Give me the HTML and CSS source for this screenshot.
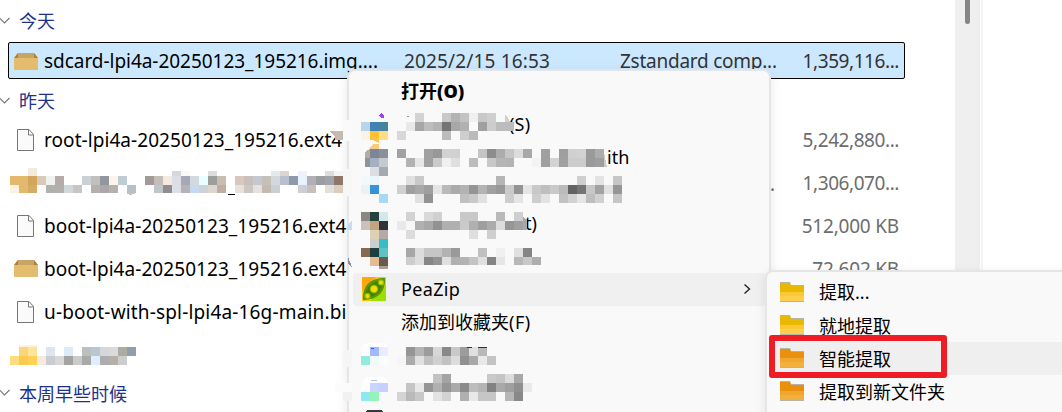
FILE: index.html
```
<!DOCTYPE html>
<html lang="zh-CN">
<head>
<meta charset="utf-8">
<title>Files</title>
<link rel="stylesheet" href="styles.css">
</head>
<body>
<svg width="0" height="0" class="defs">
  <symbol id="chev" viewBox="0 0 12 8"><path d="M0.5 1 L5.5 6 L10.5 1" fill="none" stroke="#767676" stroke-width="1.1"/></symbol>
  <symbol id="box" viewBox="0 0 24 17"><path d="M4 0H20L24 5V17H0V5Z" fill="#e3bc6e"/><path d="M4 0H20L24 5H0Z" fill="#a9803d"/><path d="M4 0H20V5H4Z" fill="#c8a564"/></symbol>
  <symbol id="doc" viewBox="0 0 18 22"><path d="M.5 .5H12L16.5 5.5V21.5H.5Z" fill="#fafafa" stroke="#777"/><path d="M11.5 .5V6H16.5" fill="none" stroke="#777"/></symbol>
  <symbol id="folder" viewBox="0 0 24 20"><path d="M0 0H10L11 3H24V20H0Z" fill="#b9b3a5"/><path class="f-back" d="M0 1H10L11 4H24V10H0Z"/><path class="f-front" d="M0 10H24V19H0Z"/><path class="f-mid" d="M0 10H24V14H0Z" opacity=".5"/></symbol>
</svg>
<div class="window">
  <main class="list">
    <div class="group first"><svg class="chev"><use href="#chev"/></svg><span>今天</span></div>
    <div class="row selected"><span class="ico"><svg class="box"><use href="#box"/></svg></span><span class="name sd">sdcard-lpi4a-20250123_195216.img....</span><span class="date">2025/2/15 16:53</span><span class="type">Zstandard comp...</span><span class="size">1,359,116...</span></div>
    <div class="group"><svg class="chev"><use href="#chev"/></svg><span>昨天</span></div>
    <div class="row"><span class="ico"><svg class="doc"><use href="#doc"/></svg></span><span class="name">root-lpi4a-20250123_195216.ext4</span><span class="size">5,242,880...</span></div>
    <div class="row"><span class="name"></span><span class="rest">.</span><span class="size">1,306,070...</span></div>
    <div class="row"><span class="ico"><svg class="doc"><use href="#doc"/></svg></span><span class="name">boot-lpi4a-20250123_195216.ext4</span><span class="size kb">512,000 KB</span></div>
    <div class="row"><span class="ico"><svg class="box"><use href="#box"/></svg></span><span class="name">boot-lpi4a-20250123_195216.ext4</span><span class="size kb">72,602 KB</span></div>
    <div class="row"><span class="ico"><svg class="doc"><use href="#doc"/></svg></span><span class="name ub">u-boot-with-spl-lpi4a-16g-main.bi</span></div>
    <div class="row"></div>
    <div class="group last"><svg class="chev"><use href="#chev"/></svg><span>本周早些时候</span></div>
  </main>
  <div class="scrollbar"><div class="thumb"></div></div>
  <aside class="preview"></aside>

  <div class="menu">
    <div class="item bold"><span>打开<b class="lat">(O)</b></span></div>
    <div class="item"><span class="lat tail-s">(S)</span></div>
    <div class="item"><span class="lat tail-ith">ith</span></div>
    <div class="item"></div>
    <div class="item"><span class="lat tail-t">t)</span></div>
    <div class="item"></div>
    <div class="item active">
      <svg class="pea" viewBox="0 0 24 24"><rect width="24" height="24" fill="#ffc80a"/><path d="M0 0H14L0 14Z" fill="#ffa60a"/><path d="M24 8V24H8Z" fill="#9be000"/><path d="M1 23C0 8 9 1 23 1C24 14 16 23 1 23Z" fill="#5c9500"/><path d="M3 21C3 11 10 4 21 3C21 13 14 20 3 21Z" fill="#4b7d00"/><g fill="#ffdc00" stroke="#8fc800" stroke-width="1.3"><circle cx="12" cy="12" r="3.6"/><circle cx="19" cy="5.5" r="2.4"/><circle cx="5.5" cy="19" r="2.4"/></g></svg>
      <span class="lat pz">PeaZip</span>
      <svg class="arrow" viewBox="0 0 8 12"><path d="M1.5 1.5L6.5 6L1.5 10.5" fill="none" stroke="#222" stroke-width="1.4"/></svg>
    </div>
    <div class="item"><span>添加到收藏夹<span class="lat fav">(F)</span></span></div>
    <div class="item"></div>
    <div class="item"></div>
  </div>

  <svg class="mosaic" id="mosaic" width="1062" height="412" shape-rendering="crispEdges"></svg>

  <div class="submenu">
    <div class="sub"><svg class="folder yellow"><use href="#folder"/></svg><span>提取<span class="lat">...</span></span></div>
    <div class="sub"><svg class="folder yellow"><use href="#folder"/></svg><span>就地提取</span></div>
    <div class="sub active"><svg class="folder orange"><use href="#folder"/></svg><span>智能提取</span></div>
    <div class="sub"><svg class="folder orange"><use href="#folder"/></svg><span>提取到新文件夹</span></div>
  </div>
  <div class="mark"></div>
</div>
<script src="mosaic.js"></script>
</body>
</html>
```

FILE: styles.css
```
body { margin: 0; background: #fff; }
.defs { position: absolute; }
.window {
  position: relative; display: flex; width: 1062px; height: 412px; overflow: hidden;
  font-family: "Noto Sans", "Noto Sans CJK SC", sans-serif; font-size: 19px; color: #000; white-space: nowrap;
}
.list { width: 955px; height: 412px; overflow: hidden; flex: none; }
.group {
  display: flex; align-items: center; height: 40px; gap: 8px; box-sizing: border-box; padding-top: 3px;
  font: 18px "Noto Sans CJK SC", sans-serif; color: #1d3287;
}
.group.first { height: 42px; padding-top: 0; }
.group.last { height: 35px; padding-top: 0; }
.group span, .row > .name, .row > .size, .row > .date, .row > .type, .item > span, .sub > span { padding-bottom: 2px; }
.chev { width: 12px; height: 8px; flex: none; margin-left: -1px; }
.group.last .chev { margin-bottom: 3px; }
.group.last span { padding-bottom: 4px; }
.row {
  display: grid; grid-template-columns: 36px 360px 216px 160px 125px; align-items: center;
  width: 897px; height: 43px; margin-left: 8px; box-sizing: border-box; line-height: 26px;
}
.row.selected { height: 37px; background: #cce8ff; border: 1px solid #000; border-radius: 2px; grid-template-columns: 35px 360px 216px 160px 124px; }
.row.selected > span { padding-bottom: 0; }
.ico { display: flex; grid-column: 1; }
.box { width: 24px; height: 17px; margin-left: 6px; margin-bottom: 2px; }
.selected .box { margin: 1px 0 0 5px; }
.doc { width: 18px; height: 22px; margin-left: 9px; margin-bottom: 2px; }
.name { grid-column: 2; letter-spacing: .06px; }
.sd { letter-spacing: -.04px; }
.ub { letter-spacing: .16px; }
.date { grid-column: 3; color: #333; letter-spacing: .16px; }
.type { grid-column: 4; color: #333; letter-spacing: -.25px; }
.rest { grid-column: 4; color: #6d6d6d; text-align: right; padding-right: 5px; }
.size { grid-column: 5; color: #6d6d6d; justify-self: end; letter-spacing: -.43px; }
.kb { letter-spacing: -.2px; }
.row:not(.selected) .size { padding-right: 6px; }
.row.selected .size { color: #333; padding-right: 5px; }
.scrollbar { width: 25px; background: #efefef; flex: none; }
.thumb { width: 5px; height: 24px; margin-left: 10px; border-radius: 0 0 3px 3px; background: #858585; }
.preview { flex: 1; margin-left: 1px; border-left: 2px solid #f5f5f5; }

.menu {
  position: absolute; left: 347px; top: 69px; width: 424px; height: 380px; box-sizing: border-box;
  background: #f9f9f9; border: 2px solid #e5e5e5; border-radius: 8px; padding: 4px 3px;
  box-shadow: 0 3px 12px rgba(0,0,0,.09);
}
.item { display: flex; align-items: center; height: 33px; padding-left: 49px; border-radius: 4px; font: 18px/26px "Noto Sans CJK SC", sans-serif; }
.lat { font-family: "Noto Sans", sans-serif; font-size: 18px; }
.bold { font-weight: 700; }
.item.active { background: #f0f0f0; margin-left: 1px; padding-left: 9px; }
.pea { width: 24px; height: 24px; margin-right: 15px; margin-bottom: 1px; }
.pz { letter-spacing: .35px; }
.fav { letter-spacing: .5px; }
.arrow { width: 8px; height: 12px; margin-left: auto; margin-right: 15px; margin-bottom: 2px; }
.tail-s { padding-left: 108px; letter-spacing: .2px; }
.tail-ith { padding-left: 206px; }
.tail-t { padding-left: 124px; }
.mosaic { position: absolute; left: 0; top: 0; }

.submenu {
  position: absolute; left: 765px; top: 270px; width: 320px; height: 180px; box-sizing: border-box;
  background: #f9f9f9; border: 2px solid #e5e5e5; border-radius: 8px; padding: 4px 3px;
  box-shadow: 0 3px 12px rgba(0,0,0,.09);
}
.sub { display: flex; align-items: center; height: 33px; padding-left: 10px; gap: 15px; font: 18px/26px "Noto Sans CJK SC", sans-serif; }
.sub.active { background: #efefef; }
.folder { width: 24px; height: 20px; margin-bottom: 1px; }
.yellow { --back: #e9b800; --front: #ffce4c; }
.orange { --back: #ea900d; --front: #f4b03c; }
.f-back { fill: var(--back); }
.f-front { fill: var(--front); }
.f-mid { fill: var(--back); opacity: .3; }
.mark { position: absolute; left: 769px; top: 335px; width: 178px; height: 43px; box-sizing: border-box; border: 6px solid #ee1c24; border-radius: 3px; }
```

FILE: mosaic.js
```
// Pixelated cells: [y, x of the first cell, cells]; "." leaves a cell empty, two digits are a gray level.
const CELL = 9;
const rows = [
  [113, 397, ". . d3 . . c8 b3 c3 f0 c8 cf"],
  [122, 397, ". e8 a6 bd b3 74 a8 b1 fa a0 cd bc bb"],
  [131, 397, "d8 . . . . bc . ce bb"],
  [149, 397, "a2 . . a0 98 d2 d1 . . c4 8c ab c6 dc a8 . a0 . 9f d0 d2 9a ad"],
  [158, 397, ". b3 e7 a0 cb f0 df . bc . c8 b5 b3 . . f3 a0 d3 a0 cc cc 9a 9e"],
  [176, 397, ". e0 c9 . . . . . . . . b5 . . . . . . . . cf . e3 . c6"],
  [185, 397, "d0 a0 a8 9f e5 b9 ab b3 95 b3 a0 98 ca 94 e5 c8 bf c9 ba 63 74 c7 a2 e0 96"],
  [194, 397, ". . e0 92 . . . c0 c9 e1 . . cd e5 . ce e3 . c2 d2 e5 be d1 . c6"],
  [212, 397, ". d3 . d9 d0 . . c8 c8 . . b9 . cf"],
  [221, 397, "e9 f7 b1 a8 92 b0 b0 ca b0 9f ac dd 96 a0"],
  [230, 397, ". dc . . . . . . de . cf"],
  [248, 397, ". a7 dc c6 c6 b3 9a . . c0 . f0 . e0 84"],
  [257, 397, ". cd dd 85 93 df b0 b3 c4 e0 84 e6 . b8 c8 ae", 8],
  [347, 397, ". 95 b4 9c d7 88 c9 9d e0 b9"],
  [356, 397, "f6 ab e0 c1 d0 c2 dc 91 a9 e9 c4"],
  [374, 397, ". . . . c2 a3 . . . . c9 c4 dc a8"],
  [383, 397, ". c5 e8 95 b0 95 ab 8b bd b5 82 a9 9f 90 e9"],
  [392, 397, "d4 b9 c8 . e2 d2 . b0 e8 c6 c6 . b7 89"],
  [122, 361, "b9d5ea 4282b4 45829b"],
  [131, 361, "f9f4e7 ffc234 fbdd88"],
  [167, 361, ". dcdfe1 a5aab0"],
  [176, 361, "f3f8fb ebf6fa"],
  [185, 361, "eaf1f7 3593d8"],
  [194, 361, ". . a9d8f2"],
  [212, 361, "8d8682 25423f d1e9eb"],
  [221, 361, "c9c1be c2a57e 303338"],
  [230, 361, ". ddd0b5 b4a9a5"],
  [239, 361, ". cdcdcd 36bfc0"],
  [248, 361, "87694f 1c3f40 5dc2c2"],
  [257, 361, ". e4bc90 69584b"],
  [266, 361, ". . ac9b91", 3],
  [347, 361, "fdfdfd a2b9ff e8edff"],
  [356, 361, "92ecdc f0faf8 fbfcfd"],
  [383, 361, "fdfdfd c8d5ff c4d1ff"],
  [392, 361, "8ee8f0 90f5b6"],
  [168, 10, ". . f2ebdc", 8],
  [171, 10, ". . . . . . . . . . . . . . . . . . d3d7df fdf8f6 . . dedbd8 . . . . . . e4e9ef dbd4cf . edf3fa . . dfddd9 f5f5f5", 5],
  [176, 10, "e3b96b e3b96b d1a65a d8cab9 f1f1f1 b5aca7 . . ccd1d5 c2bebd 91979e fbf5ed bdcdd3 . . a19a97 c4beba f3e9e2 dbdee5 a6a8b7 d4d9df e8ffff 9b9e9a c9bdb1 . d6c8be c9c0bb c3c8d1 c6c1b8 d3d8df b9bfcd 8d9aac e8f3fd b0b0b6 9c9da0 a0a3aa 8c7769"],
  [185, 10, "fbf2e3 e3b96b d4ac63 fdfdfd b0b0ae b0b0ae d2d7dc c6c6c2 . b3b0af ada7a9 b4b1af . b9bfc5 . . c0c5ca 8e8e90 dcdfe4 b4b4b8 c5daee cdd1d9 dbd6cf bdada3 . e6e3de ccc6c2 e4e1df c3bbb1 c9cfd4 . . cccfd5 c7c0bd . e3e0da dccbbf", 8],
  [345, 10, ". fbf3df fff3d5", 2],
  [347, 10, ". f9d67d ffe59b . dfe5ee . dcecf7 . bbc0bf b9c7d1 d6d7da dbdadc aeaba5 929eab"],
  [356, 10, "ffdc7c fbcb4e ffd157 f7e9dc c9ccd2 d9d8d7 a3a3a3 cbcbcc a9a9a9 deeeff adadad b5b1aa cccdcc"]
];
const svg = document.getElementById("mosaic");
const color = c => "#" + (c.length === 2 ? c + c + c : c);
let out = "";
for (const [y, x, cells, h = CELL] of rows) {
  cells.split(" ").forEach((c, i) => {
    if (c !== ".") out += `<rect x="${x + i * CELL}" y="${y}" width="${CELL}" height="${h}" fill="${color(c)}"/>`;
  });
}
// Irregular leftovers along the edges of the pixelated areas.
out += `
<path d="M329 131H343V140H335V137Z" fill="#c5bab0"/>
<path d="M343 120H352V141H343Z" fill="#fafafa"/>
<path d="M343 169H352V196H343Z" fill="#f7f7f7"/>
<path d="M343 350H352V368L343 366Z" fill="#f5f5f5"/>
<path d="M335 383H352V392H335Z" fill="#fbfbfb"/><path d="M343 392H352V401H343Z" fill="#f1f1f1"/>
<path d="M348 257L352 267L348 264Z" fill="#87909c"/><path d="M348 224L352 220V230H347Z" fill="#c8dcf0"/>
<path d="M127 193H136L130 195L127 194Z" fill="#c0c5ca"/>
<path d="M228 194H235V195H228Z" fill="#000"/>
<path d="M379 115L381 113L384 115L384 118H381Z" fill="#a040e8"/><path d="M407 116H409V117H407Z" fill="#999"/>
<path d="M373 140H379V143Z" fill="#f8c060"/><path d="M370 147L374 144H379V149H370Z" fill="#f8cb7e"/>
<path d="M505 114L508 118L510 122H505Z" fill="#d0d0d0"/>
<path d="M604 152L607 167H604Z" fill="#ccc"/><path d="M523 221V217L527 221V230H523Z" fill="#a8a8a8"/>
<path d="M365 152L370 149V158H365Z" fill="#b5ad99"/><path d="M365 158H370V167H365Z" fill="#8d949e"/>
<path d="M370 149H379V158H370Z" fill="#7a8796"/><path d="M379 149H388V158H379Z" fill="#8a909a"/>
<path d="M370 158H379V167H370Z" fill="#a5afc0"/><path d="M379 158H388V167H379Z" fill="#c5cacf"/>
<path d="M362 347L364 344L372 343H384L388 347Z" fill="#fff"/><path d="M371 348H374V349H371Z" fill="#1760ff"/>
<path d="M362 383L366 377H384L388 383Z" fill="#fff"/><path d="M371 380H377V381H371Z" fill="#a8c4ff"/>
<path d="M467 347H472V348H467ZM478 347H487V348H478Z" fill="#333"/>
<path d="M365 412L367 410H381L383 412Z" fill="#383838"/>`;
svg.innerHTML = out;
```
